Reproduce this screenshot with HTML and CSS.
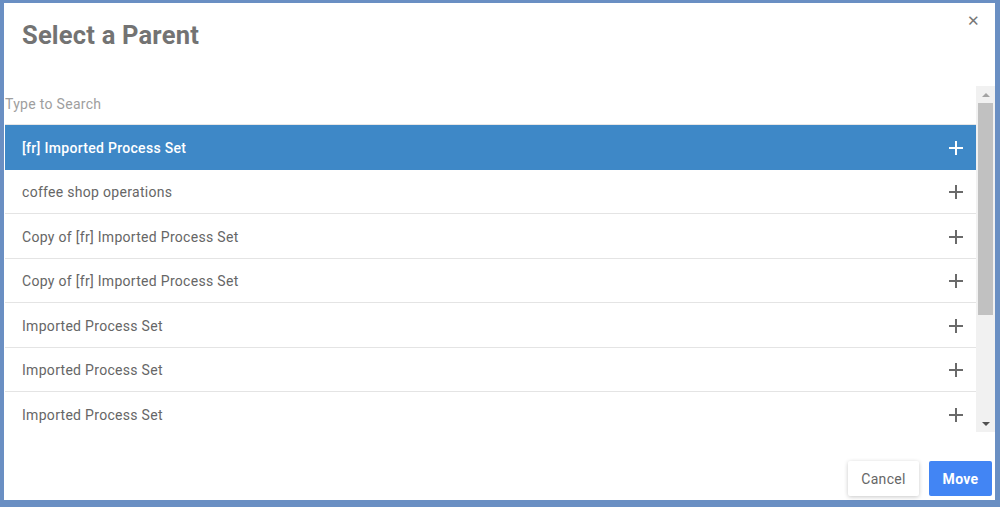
FILE: index.html
```html
<!DOCTYPE html>
<html>
<head>
<meta charset="utf-8">
<link rel="stylesheet" href="styles.css">
</head>
<body>
<div class="dialog">
  <div class="header">
    <h1 class="title">Select a Parent</h1>
    <span class="close">&#x2715;</span>
  </div>
  <div class="scroller">
    <div class="content">
      <div class="search">Type to Search</div>
      <ul class="list">
        <li class="row selected"><span>[fr] Imported Process Set</span><span class="plus"></span></li>
        <li class="row"><span>coffee shop operations</span><span class="plus"></span></li>
        <li class="row"><span>Copy of [fr] Imported Process Set</span><span class="plus"></span></li>
        <li class="row"><span>Copy of [fr] Imported Process Set</span><span class="plus"></span></li>
        <li class="row"><span>Imported Process Set</span><span class="plus"></span></li>
        <li class="row"><span>Imported Process Set</span><span class="plus"></span></li>
        <li class="row"><span>Imported Process Set</span><span class="plus"></span></li>
      </ul>
    </div>
    <div class="scrollbar">
      <div class="arrow up"></div>
      <div class="track"><div class="thumb"></div></div>
      <div class="arrow down"></div>
    </div>
  </div>
  <div class="footer">
    <button class="btn cancel">Cancel</button>
    <button class="btn move">Move</button>
  </div>
</div>
</body>
</html>
```
FILE: styles.css
```css
html, body {
  margin: 0;
  padding: 0;
  background: #6a8fc3;
  height: 507px;
  overflow: hidden;
}
body {
  padding: 3px 5px 0 4px;
  box-sizing: border-box;
  font-family: Roboto, "Liberation Sans", sans-serif;
}
.dialog {
  background: #fff;
  height: 497px;
  display: flex;
  flex-direction: column;
}
.header {
  height: 83px;
  display: flex;
  justify-content: space-between;
  align-items: flex-start;
  padding: 0 15px 0 18px;
  box-sizing: border-box;
}
.title {
  margin: 17px 0 0 0;
  font-size: 25.5px;
  font-weight: 700;
  color: #737373;
  letter-spacing: 0.2px;
}
.close {
  margin-top: 9px;
  font-size: 15px;
  color: #777;
}
.scroller {
  display: flex;
  height: 346px;
  margin-left: 1px;
}
.content {
  flex: 1;
  overflow: hidden;
}
.search {
  height: 39px;
  box-sizing: border-box;
  padding-top: 10px;
  font-size: 14px;
  letter-spacing: 0.3px;
  color: #9e9e9e;
  border-bottom: 1px solid #e6e6e6;
}
.list {
  list-style: none;
  margin: 0;
  padding: 0;
}
.row {
  height: 44.5px;
  box-sizing: border-box;
  border-bottom: 1px solid #e4e4e4;
  display: flex;
  align-items: center;
  justify-content: space-between;
  padding: 2px 13px 0 17px;
  font-size: 14px;
  letter-spacing: 0.3px;
  color: #666;
}
.row.selected {
  background: #3e88c7;
  color: #fff;
  border-bottom-color: #3e88c7;
  font-weight: 500;
}
.plus {
  position: relative;
  width: 14px;
  height: 14px;
  flex: none;
}
.plus::before, .plus::after {
  content: "";
  position: absolute;
  background: #6a6a6a;
}
.plus::before { left: 6px; top: 0; width: 2px; height: 14px; }
.plus::after { top: 6px; left: 0; width: 14px; height: 2px; }
.selected .plus::before, .selected .plus::after { background: #fff; }
.scrollbar {
  width: 19px;
  background: #f1f1f1;
  display: flex;
  flex-direction: column;
}
.arrow {
  height: 17px;
  display: flex;
  align-items: center;
  justify-content: center;
}
.arrow::before {
  content: "";
  border-left: 4px solid transparent;
  border-right: 4px solid transparent;
}
.arrow.up::before { border-bottom: 4px solid #a3a3a3; }
.arrow.down::before { border-top: 4px solid #505050; }
.track { flex: 1; padding: 0 2px; }
.thumb {
  background: #c1c1c1;
  height: 212px;
}
.footer {
  flex: 1;
  display: flex;
  justify-content: flex-end;
  align-items: flex-end;
  gap: 10px;
  padding: 0 3px 4px 0;
}
.btn {
  height: 35px;
  border: none;
  border-radius: 2px;
  font-family: Roboto, "Liberation Sans", sans-serif;
  font-size: 14px;
  letter-spacing: 0.3px;
  padding: 0;
}
.cancel {
  width: 71px;
  background: #fff;
  color: #666;
  box-shadow: 0 1px 4px rgba(0,0,0,0.22);
}
.move {
  width: 63px;
  background: #4285f4;
  color: #fff;
  font-weight: 700;
}
```
